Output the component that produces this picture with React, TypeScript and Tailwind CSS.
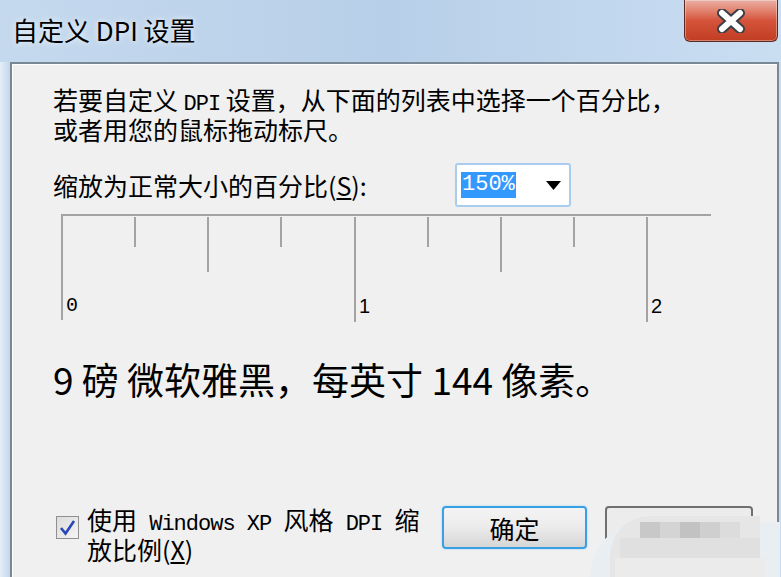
import React from 'react';

const simsun = { fontFamily: '"Noto Sans CJK SC", "Liberation Sans", sans-serif' };

function Latin({ children }: { children: React.ReactNode }) {
  return <span className="font-['Liberation_Mono',monospace] text-[22px] tracking-[-1px] whitespace-pre">{children}</span>;
}

function CloseButton() {
  return (
    <div className="w-[94px] h-[42px] rounded-b-[6px] border border-t-0 border-[#5b2b22] bg-gradient-to-b from-[#eab0a4] via-[#d4533a] to-[#c13d22] flex items-center justify-center shadow-[inset_0_0_0_1px_rgba(255,255,255,0.35)]">
      <svg width="30" height="24" viewBox="0 0 30 24">
        <path d="M6 4 L24 20 M24 4 L6 20" stroke="#3a3f4a" strokeWidth="10" strokeLinecap="round" />
        <path d="M6 4 L24 20 M24 4 L6 20" stroke="#ffffff" strokeWidth="6" strokeLinecap="round" />
      </svg>
    </div>
  );
}

function Ruler() {
  const ticks = [
    { x: 73, h: 30 },
    { x: 146, h: 55 },
    { x: 219, h: 30 },
    { x: 293, h: 105, label: '1' },
    { x: 366, h: 30 },
    { x: 439, h: 55 },
    { x: 512, h: 30 },
    { x: 585, h: 105, label: '2' },
  ];
  return (
    <div className="relative w-[650px] h-[106px] border-t-2 border-l-2 border-[#a3a3a3]">
      {ticks.map((t) => (
        <div
          key={t.x}
          className="absolute top-[1px] w-[2px] bg-[#a3a3a3]"
          style={{ left: t.x - 2, height: t.h }}
        />
      ))}
      <span className="absolute left-[3px] top-[80px] text-[20px] leading-[20px] text-black font-['Liberation_Mono',monospace]">0</span>
      {ticks
        .filter((t) => t.label)
        .map((t) => (
          <span
            key={t.label}
            className="absolute top-[80px] text-[20px] leading-[20px] text-black font-['Liberation_Sans',sans-serif]"
            style={{ left: t.x + 3 }}
          >
            {t.label}
          </span>
        ))}
    </div>
  );
}

export default function App() {
  return (
    <div className="w-[781px] h-[577px] overflow-hidden flex flex-col bg-gradient-to-r from-[#c5d9ee] via-[#b7cfe8] to-[#cadef2] relative">
      {/* Title bar */}
      <div className="h-[62px] flex items-start shrink-0">
        <div
          className="pl-[12px] pt-[14px] text-[26px] leading-[32px] text-black [text-shadow:0_0_6px_rgba(255,255,255,0.9)]"
          style={simsun}
        >
          自定义 DPI 设置
        </div>
        <div className="ml-auto mr-[3px]">
          <CloseButton />
        </div>
      </div>

      {/* Body */}
      <div className="flex-1 flex">
        <div className="w-[10px] shrink-0 bg-gradient-to-r from-[#e4eef8] to-[#c3d7ec]" />
        <div className="flex-1 border-2 border-b-0 border-[#7a8896] bg-[#f0f0f0] shadow-[inset_1px_1px_0_#ffffff] pl-[41px] pt-[23px] text-black" style={simsun}>
          <p className="text-[25px] leading-[25px]">
            若要自定义 <Latin>DPI</Latin> 设置，从下面的列表中选择一个百分比，
            <br />
            或者用您的鼠标拖动标尺。
          </p>

          <div className="flex items-center mt-[21px]">
            <span className="w-[402px] text-[25px] leading-[26px]">
              缩放为正常大小的百分比(<span className="underline">S</span>):
            </span>
            <div className="w-[116px] h-[44px] rounded-[3px] border-2 border-[#a9cdef] bg-white flex items-center pl-[4px] pr-[8px]">
              <span className="bg-[#3399ff] text-white px-[1px] text-[22px] leading-[26px] font-['Liberation_Mono',monospace]">150%</span>
              <svg className="ml-auto" width="15" height="9" viewBox="0 0 15 9">
                <path d="M0 0 H15 L7.5 9 Z" fill="#000" />
              </svg>
            </div>
          </div>

          <div className="mt-[7px] ml-[8px]">
            <Ruler />
          </div>

          <div className="mt-[38px] text-[37px] leading-[42px]">
            9 磅 微软雅黑，每英寸 144 像素。
          </div>

          <div className="mt-[107px] flex items-start">
            <div className="mt-[9px] ml-[3px] w-[23px] h-[23px] border border-[#8f8f8f] bg-gradient-to-br from-[#dcdcdc] to-[#f4f4f4] flex items-center justify-center">
              <svg width="17" height="17" viewBox="0 0 17 17">
                <path d="M2 9 L6.5 14.5 L15 2" stroke="#2a47b8" strokeWidth="2.6" fill="none" />
              </svg>
            </div>
            <p className="ml-[8px] w-[343px] text-[25px] leading-[25px]">
              使用<Latin> Windows XP </Latin>风格<Latin> DPI </Latin>缩
              <br />
              放比例(<span className="underline">X</span>)
            </p>
            <button className="ml-[12px] mt-[-1px] w-[145px] h-[43px] rounded-[4px] border-2 border-[#3aa0e4] bg-gradient-to-b from-[#f4f4f4] via-[#ebebeb] to-[#d6d6d6] shadow-[0_0_2px_#8fd0f6] text-[25px] leading-[28px] text-black">
              确定
            </button>
            <button className="ml-[18px] mt-[-1px] w-[148px] h-[43px] rounded-[4px] border-2 border-[#707070] bg-[#ececec]" />
          </div>
        </div>
        <div className="w-[2px] shrink-0 bg-[#c9dcf0]" />
      </div>

      {/* watermark blur overlay */}
      <div className="absolute left-[585px] top-[508px] w-[195px] h-[69px] pointer-events-none">
        <div className="absolute left-[5px] top-[14px] w-[190px] h-[55px] rounded-tl-[60px] bg-[#e8eef2]" />
        <div className="absolute left-[25px] top-[8px] w-[150px] h-[61px] rounded-tl-[40px] bg-[#e6e6e6]" />
        <div className="absolute left-[55px] top-[14px] w-[20px] h-[16px] bg-[#c8c8c8]" />
        <div className="absolute left-[75px] top-[14px] w-[20px] h-[16px] bg-[#d4d4d4]" />
        <div className="absolute left-[95px] top-[14px] w-[20px] h-[16px] bg-[#c2c2c2]" />
        <div className="absolute left-[115px] top-[14px] w-[20px] h-[16px] bg-[#cfcfcf]" />
        <div className="absolute left-[135px] top-[14px] w-[20px] h-[16px] bg-[#dcdcdc]" />
        <div className="absolute left-[35px] top-[30px] w-[140px] h-[20px] bg-[#e0e0e0]" />
        <div className="absolute left-[30px] top-[50px] w-[150px] h-[19px] bg-[#ebebeb]" />
      </div>
    </div>
  );
}
